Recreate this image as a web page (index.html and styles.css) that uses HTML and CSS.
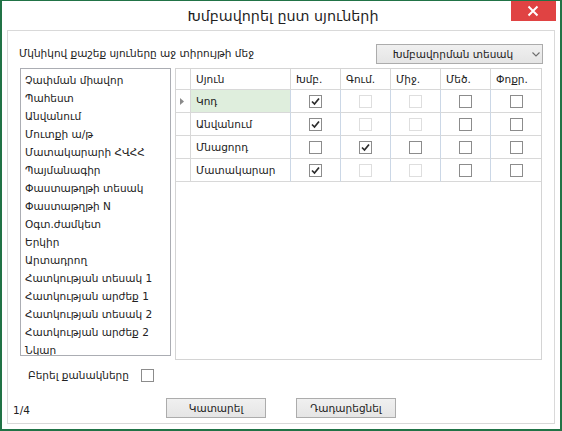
FILE: index.html
```html
<!DOCTYPE html>
<html lang="hy">
<head>
<meta charset="utf-8">
<title>Խմբավորել ըստ սյուների</title>
<link rel="stylesheet" href="styles.css">
</head>
<body>
<div class="window">
  <div class="titlebar">
    <span class="tb-spacer"></span>
    <div class="title">Խմբավորել ըստ սյուների</div>
    <div class="close">
      <svg width="45" height="20" viewBox="0 0 45 20"><path d="M17.5 5.5 L26.5 14.5 M26.5 5.5 L17.5 14.5" stroke="#fff" stroke-width="2" fill="none"/></svg>
    </div>
  </div>
  <div class="panel">
    <div class="toprow">
      <div class="hint">Մկնիկով քաշեք սյուները աջ տիրույթի մեջ</div>
      <div class="dropdown">
        <span class="dd-text">Խմբավորման տեսակ</span>
        <span class="dd-arrow"><svg width="8" height="5" viewBox="0 0 8 5"><path d="M0.5 0.5 L4 4 L7.5 0.5" stroke="#6d6d6d" stroke-width="1.1" fill="none"/></svg></span>
      </div>
    </div>
    <div class="main">
      <div class="leftcol">
        <div class="listbox">
          <div class="item">Չափման միավոր</div>
          <div class="item">Պահեստ</div>
          <div class="item">Անվանում</div>
          <div class="item">Մուտքի ա/թ</div>
          <div class="item">Մատակարարի ՀՎՀՀ</div>
          <div class="item">Պայմանագիր</div>
          <div class="item">Փաստաթղթի տեսակ</div>
          <div class="item">Փաստաթղթի N</div>
          <div class="item">Օգտ.ժամկետ</div>
          <div class="item">Երկիր</div>
          <div class="item">Արտադրող</div>
          <div class="item">Հատկության տեսակ 1</div>
          <div class="item">Հատկության արժեք 1</div>
          <div class="item">Հատկության տեսակ 2</div>
          <div class="item">Հատկության արժեք 2</div>
          <div class="item">Նկար</div>
        </div>
        <div class="bring">
          <span>Բերել քանակները</span>
          <span class="cb"></span>
        </div>
      </div>
      <div class="gridbox">
        <div class="grid">
          <div class="hc rh"></div>
          <div class="hc">Սյուն</div>
          <div class="hc">Խմբ.</div>
          <div class="hc">Գում.</div>
          <div class="hc">Միջ.</div>
          <div class="hc">Մեծ.</div>
          <div class="hc last">Փոքր.</div>

          <div class="dc rh"><svg width="4" height="7" viewBox="0 0 4 7"><path d="M0 0 L4 3.5 L0 7 Z" fill="#8a8a8a"/></svg></div>
          <div class="dc name sel">Կոդ</div>
          <div class="dc ck"><span class="cb on"><svg width="11" height="11" viewBox="0 0 11 11"><path d="M2 5.5 L4.5 8 L9 2.5" stroke="#2b2b2b" stroke-width="1.7" fill="none"/></svg></span></div>
          <div class="dc ck"><span class="cb dis"></span></div>
          <div class="dc ck"><span class="cb dis"></span></div>
          <div class="dc ck"><span class="cb"></span></div>
          <div class="dc ck last"><span class="cb"></span></div>

          <div class="dc rh"></div>
          <div class="dc name">Անվանում</div>
          <div class="dc ck"><span class="cb on"><svg width="11" height="11" viewBox="0 0 11 11"><path d="M2 5.5 L4.5 8 L9 2.5" stroke="#2b2b2b" stroke-width="1.7" fill="none"/></svg></span></div>
          <div class="dc ck"><span class="cb dis"></span></div>
          <div class="dc ck"><span class="cb dis"></span></div>
          <div class="dc ck"><span class="cb"></span></div>
          <div class="dc ck last"><span class="cb"></span></div>

          <div class="dc rh"></div>
          <div class="dc name">Մնացորդ</div>
          <div class="dc ck"><span class="cb"></span></div>
          <div class="dc ck"><span class="cb on"><svg width="11" height="11" viewBox="0 0 11 11"><path d="M2 5.5 L4.5 8 L9 2.5" stroke="#2b2b2b" stroke-width="1.7" fill="none"/></svg></span></div>
          <div class="dc ck"><span class="cb"></span></div>
          <div class="dc ck"><span class="cb"></span></div>
          <div class="dc ck last"><span class="cb"></span></div>

          <div class="dc rh"></div>
          <div class="dc name">Մատակարար</div>
          <div class="dc ck"><span class="cb on"><svg width="11" height="11" viewBox="0 0 11 11"><path d="M2 5.5 L4.5 8 L9 2.5" stroke="#2b2b2b" stroke-width="1.7" fill="none"/></svg></span></div>
          <div class="dc ck"><span class="cb dis"></span></div>
          <div class="dc ck"><span class="cb dis"></span></div>
          <div class="dc ck"><span class="cb"></span></div>
          <div class="dc ck last"><span class="cb"></span></div>
        </div>
      </div>
    </div>
    <div class="footer">
      <div class="page">1/4</div>
      <div class="buttons">
        <button class="btn" type="button">Կատարել</button>
        <button class="btn" type="button">Դադարեցնել</button>
      </div>
      <span></span>
    </div>
  </div>
</div>
</body>
</html>
```

FILE: styles.css
```css
* { box-sizing: border-box; }

html, body {
  margin: 0;
  padding: 0;
  background: #fff;
}

body {
  font-family: "DejaVu Sans", "Noto Sans", sans-serif;
  font-size: 10.5px;
  color: #222;
}

.window {
  width: 562px;
  height: 431px;
  border: 2px solid #217346;
  border-top-width: 1px;
  background: #fff;
  display: flex;
  flex-direction: column;
}

.titlebar {
  height: 29px;
  flex: none;
  display: grid;
  grid-template-columns: 1fr auto 1fr;
  align-items: center;
}

.title {
  font-size: 14.3px;
  color: #1f1f1f;
  line-height: 20px;
  margin-left: 4px;
}

.close {
  justify-self: end;
  align-self: start;
  margin-right: 4px;
  width: 45px;
  height: 20px;
  background: #e04343;
  display: flex;
}

.panel {
  flex: 1;
  margin: 0 5px 5px;
  border: 1px solid #d9d9d9;
  padding: 13px 0 5px 0;
  display: flex;
  flex-direction: column;
}

.toprow {
  display: flex;
  justify-content: space-between;
  align-items: flex-start;
  padding: 0 11px 0 11px;
}

.hint {
  margin-top: 2px;
  line-height: 14px;
}

.dropdown {
  width: 167px;
  height: 20px;
  border: 1px solid #acacac;
  background: linear-gradient(#f0f0f0, #e5e5e5);
  display: flex;
  align-items: center;
}

.dd-text {
  flex: 1;
  text-align: center;
  line-height: 18px;
}

.dd-arrow {
  width: 13px;
  display: flex;
  justify-content: center;
  align-items: center;
}

.main {
  margin-top: 4px;
  padding-left: 12px;
  display: flex;
  gap: 4px;
  align-items: flex-start;
}

.leftcol {
  display: flex;
  flex-direction: column;
}

.listbox {
  width: 151px;
  height: 288px;
  border: 1px solid #abadb3;
  padding: 2px 0 0 4px;
  overflow: hidden;
}

.item {
  height: 18px;
  line-height: 18px;
  white-space: nowrap;
}

.bring {
  margin-top: 12px;
  padding-left: 8px;
  display: flex;
  align-items: center;
  gap: 12px;
  line-height: 14px;
}

.cb {
  width: 13px;
  height: 13px;
  border: 1px solid #8c8c8c;
  background: #fff;
  display: flex;
  align-items: center;
  justify-content: center;
  flex: none;
}

.cb.dis {
  border-color: #dedede;
}

.gridbox {
  width: 367px;
  height: 292px;
  border: 1px solid #d4d4d4;
  background: #fff;
}

.grid {
  display: grid;
  grid-template-columns: 15px 100px 50px 50px 50px 50px 50px;
  grid-template-rows: 21px 23px 23px 23px 23px;
}

.hc, .dc {
  border-right: 1px solid #d8d8d8;
  border-bottom: 1px solid #d8d8d8;
  display: flex;
  align-items: center;
  white-space: nowrap;
}

.hc {
  padding-left: 5px;
}

.dc {
  border-right-color: #cbd7e6;
}

.hc.rh, .dc.rh {
  border-right-color: #d8d8d8;
  padding-left: 4px;
}

.dc.name {
  padding-left: 5px;
}

.dc.sel {
  background: #dfeedd;
}

.dc.ck {
  justify-content: center;
}

.hc.last, .dc.last {
  border-right: none;
}

.footer {
  margin-top: auto;
  display: grid;
  grid-template-columns: 1fr auto 1fr;
  align-items: end;
}

.page {
  line-height: 14px;
  margin-bottom: 1px;
  margin-left: 5px;
}

.buttons {
  display: flex;
  gap: 30px;
}

.btn {
  width: 100px;
  height: 20px;
  border: 1px solid #acacac;
  background: linear-gradient(#f0f0f0, #e5e5e5);
  font-family: inherit;
  font-size: 10.5px;
  color: #222;
  padding: 0;
  line-height: 18px;
}
```
